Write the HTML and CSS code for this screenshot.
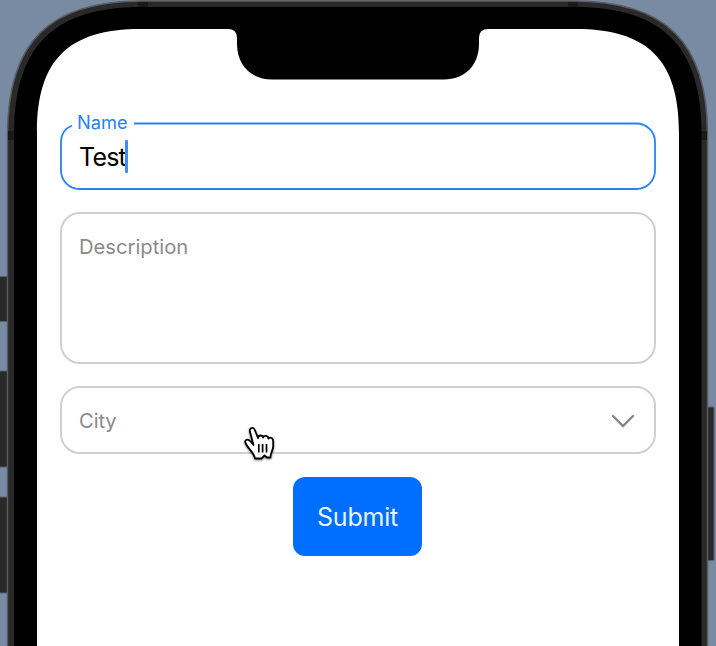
FILE: index.html
```
<!DOCTYPE html>
<html lang="en">
<head>
<meta charset="utf-8">
<title>Form</title>
<link rel="stylesheet" href="styles.css">
</head>
<body>
<svg class="device" viewBox="0 0 716 646" aria-hidden="true">
  <g fill="#292929" stroke="#59616b" stroke-width="1">
    <rect x="-4" y="276.500" width="12" height="45" rx="1"/>
    <rect x="-4" y="371" width="12" height="96" rx="1"/>
    <rect x="-4" y="497" width="12" height="96" rx="1"/>
    <rect x="707" y="407" width="7" height="153.500" rx="1"/>
  </g>
  <path fill="#292929" stroke="#5b5c5f" stroke-width="1.500" d="M7.500 660V135C7.500 42 49 1 142 1H573C666 1 707.500 42 707.500 135V660Z"/>
  <path fill="#191919" d="M138 2h10v6h-10zM568 2h10v6h-10zM8 131h7v9H8zM701 131h6v9h-6z"/>
  <path fill="#000" d="M14 660V134C14 46 54 7 141 7H575C662 7 701.500 46 701.500 134V660Z"/>
  <path fill="#fff" d="M37 660V133C37 60 68 29 141 29H228Q237 29 237 38V44C237 65 251 79.500 272 79.500H444C465 79.500 479 65 479 44V38Q479 29 488 29H575C648 29 679 60 679 133V660Z"/>
</svg>
<main class="form">
  <div class="field active">
    <svg class="outline" viewBox="0 0 596 68" aria-hidden="true"><path d="M12 3.500C5 6.500 1 12 1 19.500V48.500A18.500 18.500 0 0 0 19.500 67H576.500A18.500 18.500 0 0 0 595 48.500V20A18.500 18.500 0 0 0 576.500 1.500H74"/></svg>
    <span class="label">Name</span>
    <span class="value">Test</span><span class="caret"></span>
  </div>
  <div class="field area"><span class="placeholder">Description</span></div>
  <div class="field select">
    <span class="placeholder city">City</span>
    <svg class="chevron" viewBox="0 0 24 14" aria-hidden="true"><path d="M2 2l10 10L22 2"/></svg>
  </div>
  <button class="submit"><span class="submit-text">Submit</span></button>
</main>
<svg class="pointer" viewBox="0 0 34 38" aria-hidden="true">
  <path fill="#fff" stroke="#000" stroke-width="1.800" stroke-linejoin="round" d="M10.500 20L7 7C5.800 2.800 10.500 1.500 11.800 5L15 13C15.500 9.500 19.500 10 20 12.500C21 9.800 25 10.500 25.500 13.500C27.500 11.700 30.200 13 30.200 16.500V21C30.200 25.500 27.500 27 27.500 32.500H24L21.500 30.500L18.500 33.500H12C11 27.500 6 25 3 19C.5 15 4.500 13 7.500 16.500Z"/>
  <path fill="none" stroke="#000" stroke-width="1.700" d="M15.800 19v8.500M19.600 19v8.500M23.500 19v8.500"/>
</svg>
</body>
</html>
```
FILE: styles.css
```
* { box-sizing: border-box; }
body {
  margin: 0;
  width: 716px;
  height: 646px;
  overflow: hidden;
  position: relative;
  background: #798ba3;
  font-family: Inter, "Liberation Sans", sans-serif;
}
.device { position: absolute; inset: 0; width: 716px; height: 646px; }
.form {
  position: relative;
  display: flex;
  flex-direction: column;
  gap: 22px;
  padding: 122px 60px 0;
}
.field {
  position: relative;
  display: flex;
  height: 68px;
  padding: 0 19px;
  align-items: center;
  border: 2px solid #d0d0d2;
  border-radius: 20px;
}
.active { border: 0; padding-left: 19px; }
.outline {
  position: absolute;
  inset: 0;
  width: 596px;
  height: 68px;
  fill: none;
  stroke: #2783ee;
  stroke-width: 1.800;
}
.label {
  position: absolute;
  left: 17px;
  top: -12px;
  font-size: 18.300px;
  line-height: 24px;
  color: #2783ee;
}
.value { font-size: 25px; line-height: 32px; letter-spacing: -.8px; padding-top: 1px; }
.caret { width: 3px; height: 33px; margin-left: -1px; background: #3d8bff; border-radius: 1px; }
.area { height: 152px; align-items: flex-start; padding: 20px 17px; }
.placeholder { color: #8a8a8d; font-size: 20.200px; line-height: 26px; }
.select { justify-content: space-between; padding: 2px 19px 0 17px; }
.city { letter-spacing: -.1px; }
.chevron { width: 24px; height: 14px; fill: none; stroke: #858585; stroke-width: 2.400; stroke-linecap: round; }
.submit {
  align-self: center;
  width: 129px;
  height: 79px;
  margin: 1px 1px 0 0;
  border: 0;
  border-radius: 12px;
  background: #006eff;
  color: #e8f5ff;
  font: 25px/32px Inter, "Liberation Sans", sans-serif;
  letter-spacing: -.2px;
}
.pointer {
  position: absolute;
  left: 243px;
  top: 425px;
  width: 34px;
  height: 38px;
  filter: drop-shadow(0 1.500px 1px #0007);
}
```
